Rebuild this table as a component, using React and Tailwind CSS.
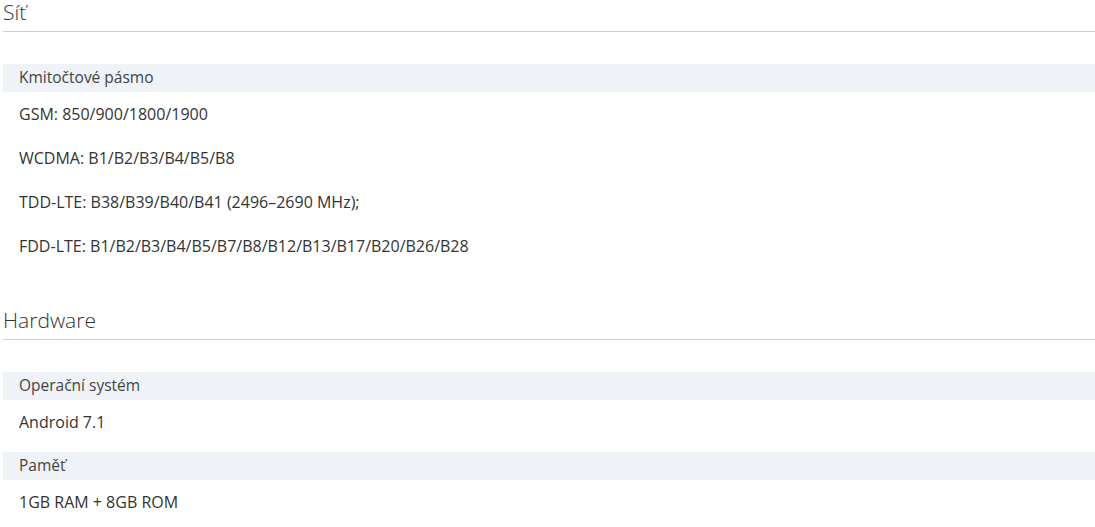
const sections = [
  {
    title: 'Síť',
    groups: [
      {
        label: 'Kmitočtové pásmo',
        values: [
          'GSM: 850/900/1800/1900',
          'WCDMA: B1/B2/B3/B4/B5/B8',
          'TDD-LTE: B38/B39/B40/B41 (2496–2690 MHz);',
          'FDD-LTE: B1/B2/B3/B4/B5/B7/B8/B12/B13/B17/B20/B26/B28',
        ],
      },
    ],
  },
  {
    title: 'Hardware',
    groups: [
      { label: 'Operační systém', values: ['Android 7.1'] },
      { label: 'Paměť', values: ['1GB RAM + 8GB ROM'] },
    ],
  },
];

const Section = ({ section, first }) => (
  <div className={first ? '-mt-[3px]' : 'mt-[37px]'}>
    <h2 className="text-[21px] leading-[30px] pb-[4px] font-light text-[#333] border-b border-[#cfcfcf]">
      {section.title}
    </h2>
    <div className="mt-[32px]">
      {section.groups.map((group, i) => (
        <div key={group.label} className={i > 0 ? 'mt-[8px]' : ''}>
          <div className="h-[28px] flex items-center pl-[16px] bg-[#eff2f7] text-[15.5px] text-[#444]">
            {group.label}
          </div>
          {group.values.map((v) => (
            <div key={v} className="h-[44px] flex items-center pl-[16px] text-[16px] text-[#333]">
              {v}
            </div>
          ))}
        </div>
      ))}
    </div>
  </div>
);

export default function App() {
  return (
    <div
      className="bg-white min-h-screen pl-[3px] overflow-hidden"
      style={{ fontFamily: '"Open Sans", "Noto Sans", sans-serif' }}
    >
      {sections.map((s, i) => (
        <Section key={s.title} section={s} first={i === 0} />
      ))}
    </div>
  );
}
